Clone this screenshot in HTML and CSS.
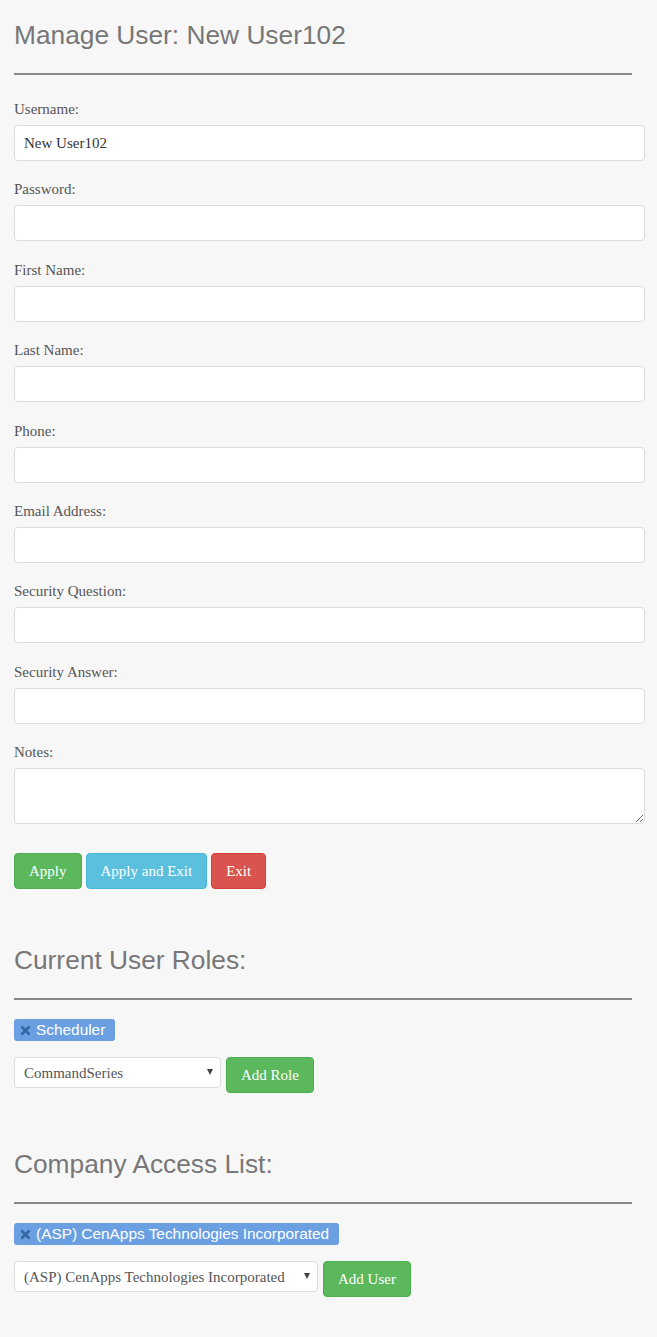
FILE: index.html
```html
<!DOCTYPE html>
<html lang="en">
<head>
    <meta charset="UTF-8">
    <meta name="viewport" content="width=device-width, initial-scale=1.0">
    <title>Manage User</title>
    <link rel="stylesheet" href="styles.css">
</head>
<body>
    <div class="page">
        <h1 class="page-title">Manage User: New User102</h1>
        <hr class="rule">

        <form class="user-form">
            <div class="field">
                <label for="username">Username:</label>
                <input type="text" id="username" value="New User102">
            </div>
            <div class="field">
                <label for="password">Password:</label>
                <input type="password" id="password">
            </div>
            <div class="field">
                <label for="firstName">First Name:</label>
                <input type="text" id="firstName">
            </div>
            <div class="field">
                <label for="lastName">Last Name:</label>
                <input type="text" id="lastName">
            </div>
            <div class="field">
                <label for="phone">Phone:</label>
                <input type="text" id="phone">
            </div>
            <div class="field">
                <label for="email">Email Address:</label>
                <input type="text" id="email">
            </div>
            <div class="field">
                <label for="secQuestion">Security Question:</label>
                <input type="text" id="secQuestion">
            </div>
            <div class="field">
                <label for="secAnswer">Security Answer:</label>
                <input type="text" id="secAnswer">
            </div>
            <div class="field">
                <label for="notes">Notes:</label>
                <textarea id="notes"></textarea>
            </div>

            <div class="actions">
                <button type="button" class="btn btn-success">Apply</button>
                <button type="button" class="btn btn-info">Apply and Exit</button>
                <button type="button" class="btn btn-danger">Exit</button>
            </div>
        </form>

        <h2 class="section-title">Current User Roles:</h2>
        <hr class="rule rule-section">
        <div class="tags">
            <span class="tag">
                <svg class="tag-x" viewBox="0 0 10 10"><path d="M2 2 L8 8 M8 2 L2 8"/></svg>
                Scheduler
            </span>
        </div>
        <div class="add-row">
            <div class="select-wrap role-select">
                <select>
                    <option>CommandSeries</option>
                </select>
            </div>
            <button type="button" class="btn btn-success">Add Role</button>
        </div>

        <h2 class="section-title">Company Access List:</h2>
        <hr class="rule rule-section">
        <div class="tags">
            <span class="tag">
                <svg class="tag-x" viewBox="0 0 10 10"><path d="M2 2 L8 8 M8 2 L2 8"/></svg>
                (ASP) CenApps Technologies Incorporated
            </span>
        </div>
        <div class="add-row">
            <div class="select-wrap company-select">
                <select>
                    <option>(ASP) CenApps Technologies Incorporated</option>
                </select>
            </div>
            <button type="button" class="btn btn-success">Add User</button>
        </div>
    </div>
</body>
</html>
```

FILE: styles.css
```css
:root {
    --color-bg: #f7f7f7;
    --color-title: #777;
    --color-label: #555;
    --color-text: #333;
    --color-border: #ddd;
    --color-rule: #888;
    --color-tag: #6a9fe2;
    --color-tag-x: #3567a3;

    --font-sans: "Liberation Sans", Arial, sans-serif;
    --font-serif: "Liberation Serif", "Times New Roman", serif;
}

body {
    margin: 0;
    background: var(--color-bg);
    font-family: var(--font-serif);
    font-size: 15px;
    color: var(--color-text);
}

.page {
    padding: 0 12px 40px 14px;
}

.page-title,
.section-title {
    font-family: var(--font-sans);
    font-weight: normal;
    font-size: 26.3px;
    line-height: 30px;
    color: var(--color-title);
    margin: 20px 0 23px;
}

.section-title {
    margin-top: 56px;
}

.rule {
    border: 0;
    border-top: 2px solid var(--color-rule);
    margin: 0 13px 24px 0;
}

.rule-section {
    margin-bottom: 19px;
}

.field {
    margin-bottom: 18.4px;
}

.field label {
    display: block;
    line-height: 20px;
    margin-bottom: 6px;
    color: var(--color-label);
}

.field input,
.field textarea {
    display: block;
    box-sizing: border-box;
    width: 100%;
    height: 36px;
    padding: 0 9px;
    background: #fff;
    border: 1px solid var(--color-border);
    border-radius: 4px;
    font-family: var(--font-serif);
    font-size: 15px;
    color: var(--color-text);
    outline: none;
}

.field textarea {
    height: 56px;
    padding: 6px 9px;
}

/* collapses with the last field's margin */
.actions {
    display: flex;
    gap: 4px;
    margin-top: 29px;
}

.btn {
    box-sizing: border-box;
    height: 36px;
    padding: 0 14px;
    border: 1px solid transparent;
    border-radius: 4px;
    font-family: var(--font-serif);
    font-size: 15px;
    color: #fff;
    cursor: pointer;
}

.btn-success {
    background: #5cb85c;
    border-color: #4cae4c;
}

.btn-info {
    background: #5bc0de;
    border-color: #46b8da;
}

.btn-danger {
    background: #d9534f;
    border-color: #d43f3a;
}

.tags {
    display: flex;
    margin-bottom: 16px;
}

.tag {
    display: inline-flex;
    align-items: center;
    gap: 5px;
    height: 22px;
    padding: 0 10px 0 6px;
    background: var(--color-tag);
    border-radius: 3px;
    font-family: var(--font-sans);
    font-size: 15.4px;
    color: #fff;
}

.tag-x {
    width: 11px;
    height: 11px;
    stroke: var(--color-tag-x);
    stroke-width: 2.4;
    stroke-linecap: round;
    fill: none;
}

.add-row {
    display: flex;
    align-items: flex-start;
    gap: 5px;
}

.select-wrap {
    position: relative;
}

.select-wrap select {
    appearance: none;
    -webkit-appearance: none;
    box-sizing: border-box;
    width: 100%;
    height: 31px;
    padding: 0 24px 0 9px;
    background: #fff;
    border: 1px solid var(--color-border);
    border-radius: 4px;
    font-family: var(--font-serif);
    font-size: 15px;
    color: var(--color-label);
    outline: none;
}

/* little arrow over the select */
.select-wrap::after {
    content: "";
    position: absolute;
    top: 12px;
    right: 8px;
    border-left: 3.5px solid transparent;
    border-right: 3.5px solid transparent;
    border-top: 6px solid #444;
    pointer-events: none;
}

.role-select {
    width: 207px;
}

.company-select {
    width: 304px;
}
```
